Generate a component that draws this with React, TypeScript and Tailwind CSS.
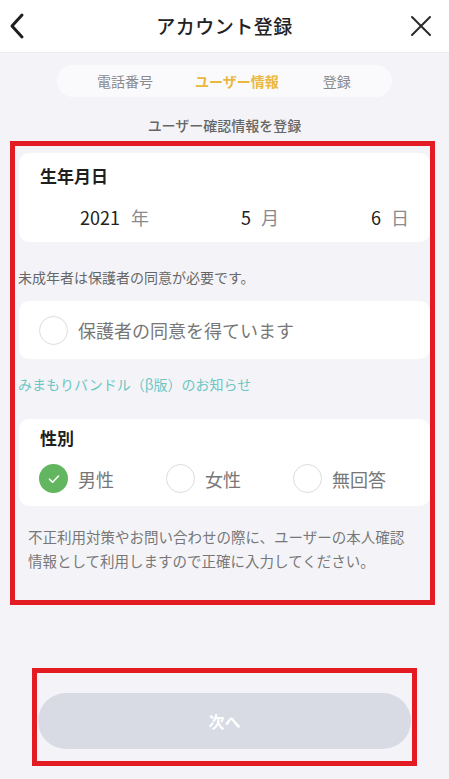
import React from 'react';

const font = { fontFamily: '"Noto Sans CJK JP", "Noto Sans", sans-serif' };

function Radio({ checked, label }: { checked?: boolean; label: string }) {
  return (
    <div className="flex items-center w-[127px]">
      {checked ? (
        <div className="w-[29px] h-[29px] rounded-full bg-[#62b660] flex items-center justify-center">
          <svg width="14" height="14" viewBox="0 0 14 14" fill="none">
            <path d="M2.5 7.2 L5.6 10.2 L11.5 4" stroke="#fff" strokeWidth="1.6" strokeLinecap="round" strokeLinejoin="round" />
          </svg>
        </div>
      ) : (
        <div className="w-[29px] h-[29px] rounded-full border border-[#dcdcdc] bg-white" />
      )}
      <span className="ml-[10px] text-[18px] leading-[26px] text-[#777]">{label}</span>
    </div>
  );
}

export default function App() {
  return (
    <div className="relative w-[449px] min-h-[779px] bg-[#f4f4f8]" style={font}>
      {/* header */}
      <div className="h-[53px] bg-white border-b border-[#ececf0] grid grid-cols-[50px_1fr_50px] items-center">
        <svg width="18" height="28" viewBox="0 0 18 28" fill="none" className="ml-[8px]">
          <path d="M14 3 L4 14 L14 25" stroke="#1f1f1f" strokeWidth="3" strokeLinecap="round" strokeLinejoin="round" />
        </svg>
        <h1 className="text-center text-[19px] font-medium text-[#222] tracking-[0.5px]">アカウント登録</h1>
        <svg width="26" height="26" viewBox="0 0 26 26" fill="none" className="ml-[9px]">
          <path d="M4 4 L22 22 M22 4 L4 22" stroke="#2a2a2a" strokeWidth="2" strokeLinecap="round" />
        </svg>
      </div>

      {/* steps */}
      <div className="mt-[12px] mx-[57px] h-[32px] rounded-full bg-[#fafafc] flex items-center text-[14px]">
        <span className="ml-[40px] text-[#8a8a8e]">電話番号</span>
        <span className="ml-[42px] font-bold text-[#eab83e]">ユーザー情報</span>
        <span className="ml-[44px] text-[#8a8a8e]">登録</span>
      </div>

      <p className="mt-[18px] text-center text-[14px] leading-[20px] font-medium text-[#666]">ユーザー確認情報を登録</p>

      <div className="px-[19px]">
        {/* birthday */}
        <div className="mt-[18px] bg-white rounded-[10px] pt-[11px] pb-[12px]">
          <div className="pl-[21px] text-[17px] leading-[24px] font-bold text-[#1f1f1f]">生年月日</div>
          <div className="mt-[16px] flex justify-between pl-[61px] pr-[21px] text-[18px] leading-[26px]">
            <span className="text-[#222]">2021<span className="ml-[11px] text-[#8a8a8e]">年</span></span>
            <span className="text-[#222]">5<span className="ml-[10px] text-[#8a8a8e]">月</span></span>
            <span className="text-[#222]">6<span className="ml-[10px] text-[#8a8a8e]">日</span></span>
          </div>
        </div>
      </div>

      <p className="mt-[25px] ml-[18px] text-[14px] leading-[20px] text-[#666]">未成年者は保護者の同意が必要です。</p>

      <div className="px-[19px]">
        <div className="mt-[14px] h-[58px] bg-white rounded-[10px] flex items-center pl-[20px]">
          <div className="w-[29px] h-[29px] rounded-full border border-[#dcdcdc] bg-white" />
          <span className="ml-[10px] text-[18px] text-[#777]">保護者の同意を得ています</span>
        </div>
      </div>

      <p className="mt-[15px] ml-[18px] text-[14px] leading-[20px] text-[#6ec6c4]">みまもりバンドル（β版）のお知らせ</p>

      <div className="px-[19px]">
        <div className="mt-[25px] bg-white rounded-[10px] pt-[7px] pb-[13px]">
          <div className="pl-[21px] text-[17px] leading-[24px] font-bold text-[#1f1f1f]">性別</div>
          <div className="mt-[14px] flex pl-[20px]">
            <Radio checked label="男性" />
            <Radio label="女性" />
            <Radio label="無回答" />
          </div>
        </div>
      </div>

      <p className="mt-[19px] ml-[28px] text-[14.5px] leading-[24px] text-[#777]">
        不正利用対策やお問い合わせの際に、ユーザーの本人確認
        <br />
        情報として利用しますので正確に入力してください。
      </p>

      <div className="px-[38px] pb-[29px]">
        <button className="mt-[120px] w-full h-[56px] rounded-full bg-[#d8dae4] text-white text-[16px] font-bold">次へ</button>
      </div>

      {/* red annotation frames */}
      <div className="absolute left-[10px] top-[141px] w-[425px] h-[464px] border-[5px] border-[#e31b23] pointer-events-none" />
      <div className="absolute left-[32px] top-[668px] w-[385px] h-[98px] border-[5px] border-[#e31b23] pointer-events-none" />
    </div>
  );
}
